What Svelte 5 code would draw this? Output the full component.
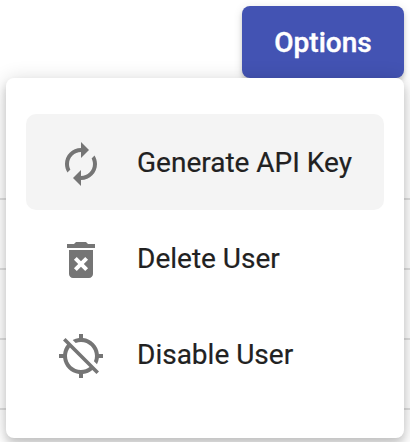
<script>
  const items = [
    {
      label: 'Generate API Key',
      active: true,
      icon: 'M12 6v3l4-4-4-4v3c-4.42 0-8 3.58-8 8 0 1.57.46 3.03 1.24 4.26L6.7 14.8c-.45-.83-.7-1.79-.7-2.8 0-3.31 2.69-6 6-6zm6.76 1.74L17.3 9.2c.44.84.7 1.79.7 2.8 0 3.31-2.69 6-6 6v-3l-4 4 4 4v-3c4.42 0 8-3.58 8-8 0-1.57-.46-3.03-1.24-4.26z'
    },
    {
      label: 'Delete User',
      icon: 'M6 19c0 1.1.9 2 2 2h8c1.1 0 2-.9 2-2V7H6v12zm2.46-7.12l1.41-1.41L12 12.59l2.12-2.12 1.41 1.41L13.41 14l2.12 2.12-1.41 1.41L12 15.41l-2.12 2.12-1.41-1.41L10.59 14l-2.13-2.12zM15.5 4l-1-1h-5l-1 1H5v2h14V4z'
    },
    {
      label: 'Disable User',
      icon: 'M20.94 11c-.46-4.17-3.77-7.48-7.94-7.94V1h-2v2.06c-1.13.12-2.19.46-3.16.97l1.5 1.5C10.16 5.19 11.06 5 12 5c3.87 0 7 3.13 7 7 0 .94-.19 1.84-.52 2.65l1.5 1.5c.5-.96.84-2.02.97-3.15H23v-2h-2.06zM3 4.27l2.04 2.04C3.97 7.62 3.25 9.23 3.06 11H1v2h2.06c.46 4.17 3.77 7.48 7.94 7.94V23h2v-2.06c1.77-.2 3.38-.91 4.69-1.98L19.73 21 21 19.73 4.27 3 3 4.27zm13.27 13.27C15.09 18.45 13.61 19 12 19c-3.87 0-7-3.13-7-7 0-1.61.55-3.09 1.46-4.27l9.81 9.81z'
    }
  ];
  const rows = [1, 2, 3, 4];
</script>

<div class="page">
  <header><button class="options">Options</button></header>
  <div class="table">
    {#each rows as row (row)}
      <div class="row"></div>
    {/each}
  </div>
  <div class="menu" role="menu">
    {#each items as item (item.label)}
      <div class="item" class:active={item.active} role="menuitem" tabindex="-1">
        <svg viewBox="0 0 24 24" aria-hidden="true"><path d={item.icon} /></svg>
        <span>{item.label}</span>
      </div>
    {/each}
  </div>
</div>

<style>
  :global(body) {
    margin: 0;
    background: #fff;
  }
  .page {
    position: relative;
    width: 410px;
    height: 442px;
    overflow: hidden;
    font-family: Roboto, sans-serif;
  }
  header {
    display: flex;
    justify-content: flex-end;
    padding: 6px 6px 0 0;
  }
  .options {
    width: 162px;
    height: 72px;
    padding: 2px 0 0;
    border: 0;
    border-radius: 8px;
    background: #4353b3;
    color: #fff;
    font: 500 28px/70px Roboto, sans-serif;
    -webkit-text-stroke: 0.4px #fff;
    box-shadow: 0 4px 4px rgba(0, 0, 0, 0.14), 0 2px 10px rgba(0, 0, 0, 0.12);
  }
  .table {
    padding-top: 52px;
  }
  .row {
    box-sizing: border-box;
    height: 70px;
    border-bottom: 2px solid #e0e0e0;
  }
  .menu {
    position: absolute;
    top: 78px;
    left: 6px;
    box-sizing: border-box;
    width: 398px;
    height: 360px;
    padding: 36px 20px;
    border-radius: 8px;
    background: #fff;
    box-shadow: 0 6px 8px rgba(0, 0, 0, 0.16), 0 2px 20px rgba(0, 0, 0, 0.16);
  }
  .item {
    display: flex;
    align-items: center;
    gap: 32px;
    box-sizing: border-box;
    height: 96px;
    padding-left: 31px;
    border-radius: 10px;
    color: #212121;
    font-size: 28px;
    line-height: 94px;
    white-space: nowrap;
  }
  .item span {
    padding-top: 2px;
    -webkit-text-stroke: 0.2px #212121;
  }
  .active {
    background: #f4f4f4;
  }
  svg {
    width: 48px;
    height: 48px;
    margin-top: 4px;
    fill: #757575;
  }
</style>
